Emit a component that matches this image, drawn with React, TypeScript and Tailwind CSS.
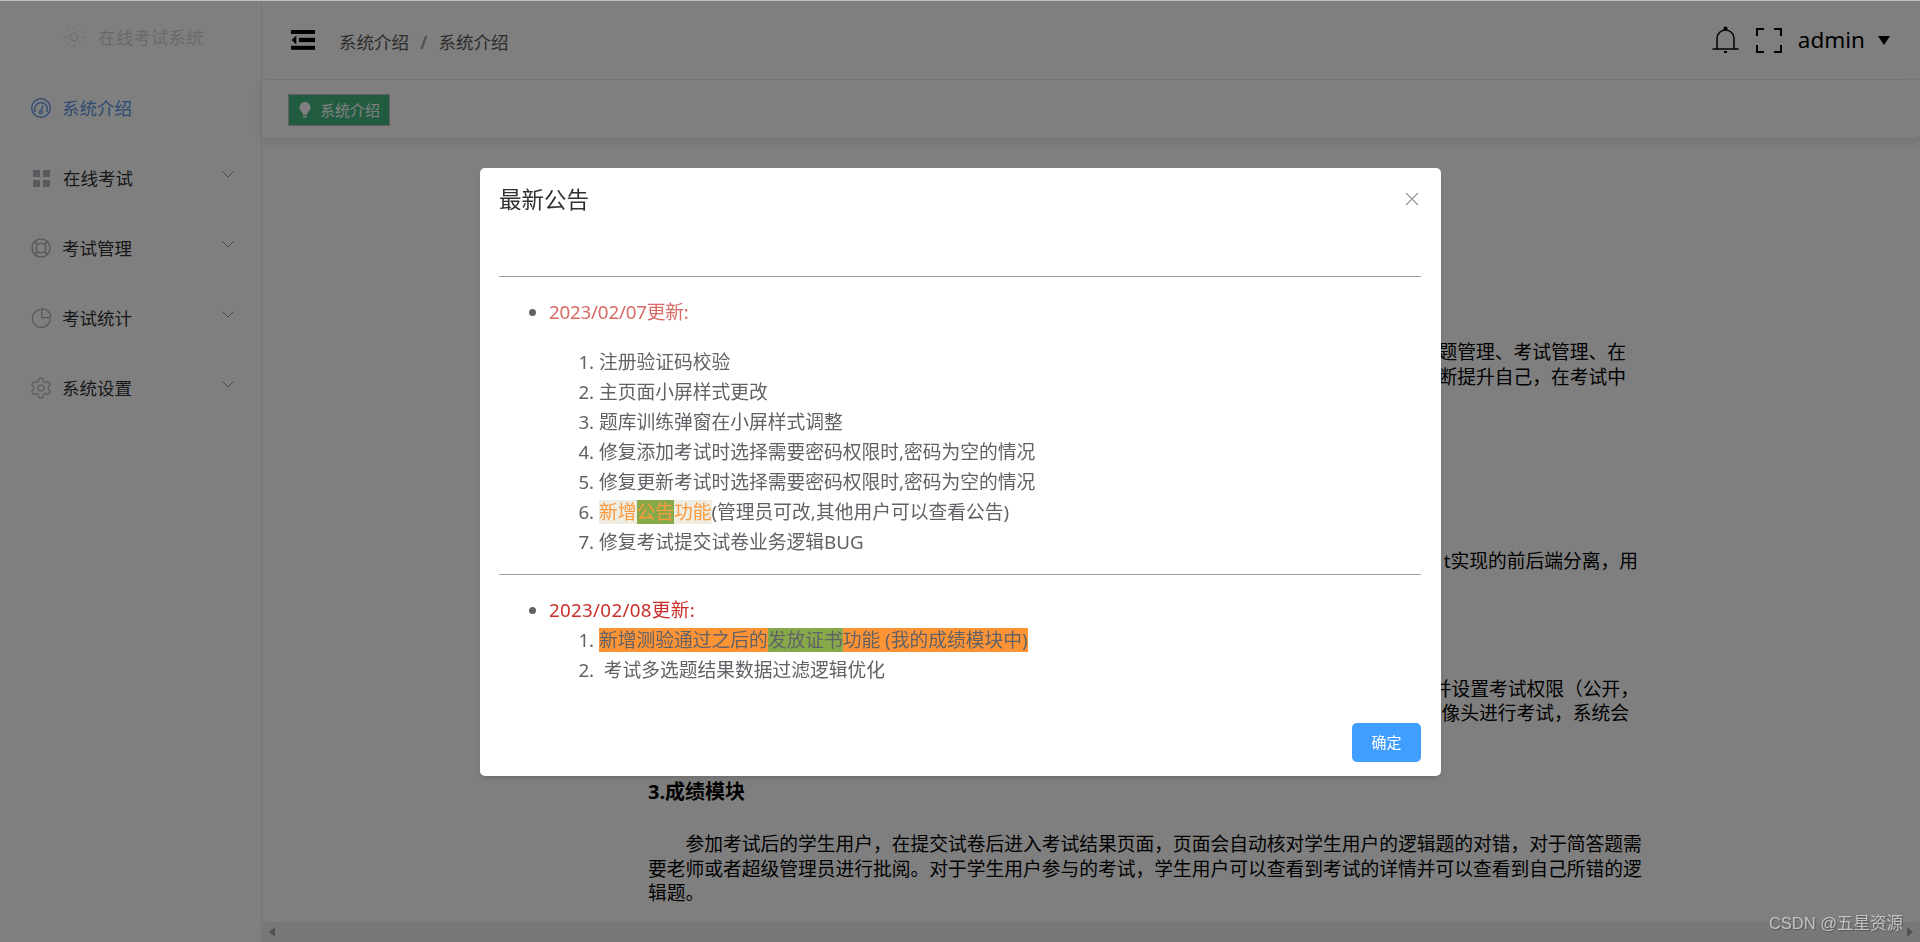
import { Settings, Sun } from "lucide-react";

const fontStack = "font-['Noto_Sans','Noto_Sans_CJK_SC',sans-serif]";

function GaugeIcon() {
  return (
    <svg viewBox="0 0 20 20" className="h-5 w-5 shrink-0" fill="none" stroke="currentColor" strokeWidth="1.300">
      <circle cx="10" cy="10" r="9.300" />
      <path d="M4.300 14a6.400 6.400 0 1 1 11.400 0" />
      <path d="M11.800 7.200 10.300 13" />
      <circle cx="9.800" cy="14.300" r="1.400" />
    </svg>
  );
}

function GridIcon() {
  return (
    <div className="mx-[2px] grid h-[17px] w-[17px] shrink-0 grid-cols-2 gap-[3px]">
      <span className="bg-[#b4b4bc]" />
      <span className="bg-[#b4b4bc]" />
      <span className="bg-[#b4b4bc]" />
      <span className="bg-[#b4b4bc]" />
    </div>
  );
}

function HelpIcon() {
  return (
    <svg viewBox="0 0 20 20" className="h-5 w-5 shrink-0" fill="none" stroke="#b4b4bc" strokeWidth="1.500">
      <circle cx="10" cy="10" r="9" />
      <circle cx="10" cy="10" r="4.800" />
      <path d="M3.700 3.700 6.600 6.600M16.300 3.700 13.400 6.600M3.700 16.300 6.600 13.400M16.300 16.300 13.400 13.400" strokeWidth="1.800" />
    </svg>
  );
}

function PieIcon() {
  return (
    <svg viewBox="0 0 20 20" className="h-5 w-5 shrink-0" fill="none" stroke="#b4b4bc" strokeWidth="1.400">
      <path d="M9.700 1.500A9 9 0 1 0 19.300 11" />
      <path d="M10.800 0.600V9.600H19.800A9 9 0 0 0 10.800 0.600z" />
    </svg>
  );
}

function Chevron() {
  return (
    <svg viewBox="0 0 12 7" className="mr-[27px] mb-2 ml-auto h-[7px] w-3" fill="none" stroke="#909399" strokeWidth="1">
      <path d="M.5.5 6 6l5.500-5.500" />
    </svg>
  );
}

function MenuFoldIcon() {
  return (
    <svg viewBox="0 0 24 20" className="h-5 w-6 shrink-0 text-black" fill="currentColor">
      <rect x="0" y="0" width="24" height="4" />
      <rect x="8" y="7.800" width="16" height="4.300" />
      <path d="M5.300 5.500v9L0.700 10z" />
      <rect x="0" y="15.800" width="24" height="4" />
    </svg>
  );
}

function BellIcon() {
  return (
    <svg viewBox="0 0 27 28" className="h-7 w-[27px]" fill="none" stroke="#000" strokeWidth="1.500">
      <path d="M5 23V12.500a8.500 8.500 0 0 1 17 0V23" />
      <path d="M0.500 23h26" />
      <circle cx="13.500" cy="2.500" r="1.300" fill="#000" />
      <path d="M12 26h3" strokeWidth="2" />
    </svg>
  );
}

function FullscreenIcon() {
  return (
    <svg viewBox="0 0 26 25" className="h-[25px] w-[26px]" fill="none" stroke="#000" strokeWidth="2">
      <path d="M8 1H1v7M18 1h7v7M1 17v7h7M25 17v7h-7" />
    </svg>
  );
}

function BulbIcon() {
  return (
    <svg viewBox="0 0 12 16" className="h-4 w-3 shrink-0" fill="#fff">
      <path d="M6 0a5.500 5.500 0 0 0-3 10.100L4 13h4l1-2.900A5.500 5.500 0 0 0 6 0z" />
      <rect x="4" y="14" width="4" height="1.500" />
    </svg>
  );
}

const menu = [
  { name: "在线考试", icon: <GridIcon /> },
  { name: "考试管理", icon: <HelpIcon /> },
  { name: "考试统计", icon: <PieIcon /> },
  { name: "系统设置", icon: <Settings size={24} strokeWidth={1.200} className="-mx-0.5 shrink-0 text-[#b4b4bc]" /> },
];

const fixes = [
  "注册验证码校验",
  "主页面小屏样式更改",
  "题库训练弹窗在小屏样式调整",
  "修复添加考试时选择需要密码权限时,密码为空的情况",
  "修复更新考试时选择需要密码权限时,密码为空的情况",
];

export default function App() {
  return (
    <div className={`flex h-screen overflow-hidden border-t border-[#bdbdbd] bg-white ${fontStack}`}>
      <aside className="w-[262px] shrink-0 border-r border-[#eeeeee] bg-white text-[17.5px]">
        <div className="flex h-[72px] items-center justify-center gap-[13px] pl-1 text-[#d4d4d4]">
          <Sun size={24} strokeWidth={1} className="shrink-0" />
          <span>在线考试系统</span>
        </div>
        <div className="flex h-[70px] items-center gap-[11px] pl-[31px] text-[#5a96e6]">
          <GaugeIcon />
          <span>系统介绍</span>
        </div>
        {menu.map((item) => (
          <div key={item.name} className="flex h-[70px] items-center gap-[11px] pl-[31px] text-[#303133]">
            {item.icon}
            <span>{item.name}</span>
            <Chevron />
          </div>
        ))}
      </aside>

      <div className="flex min-w-0 flex-1 flex-col">
        <header className="flex h-[79px] shrink-0 items-center border-b border-[#eeeeee] pr-[30px] pl-[29px]">
          <MenuFoldIcon />
          <div className="mt-1 ml-[24px] flex items-center text-[17.5px] text-[#5a5a5a]">
            <span>系统介绍</span>
            <span className="mx-[11px] text-[18px] font-bold text-[#a8a8a8]">/</span>
            <span>系统介绍</span>
          </div>
          <div className="ml-auto flex items-center">
            <BellIcon />
            <div className="mr-4 ml-[17px]">
              <FullscreenIcon />
            </div>
            <span className="text-[22.5px] leading-none text-black">admin</span>
            <span className="ml-[13px] h-0 w-0 border-x-[6.5px] border-t-[9px] border-x-transparent border-t-black" />
          </div>
        </header>

        <div className="h-[58px] shrink-0 rounded-b-[5px] bg-white pt-[14px] pl-[26px] shadow-[0_4px_12px_rgba(0,0,0,0.12)]">
          <div className="flex h-[32px] w-[102px] items-center gap-[9px] border border-[#bebebe] bg-[#42b983] pl-[10px] text-[15px] text-white">
            <BulbIcon />
            <span>系统介绍</span>
          </div>
        </div>

        <main className="min-h-0 flex-1 overflow-hidden pt-[202px] pl-[386px] text-[18.75px] leading-[24.500px] text-black">
          <div className="w-[994px]">
            <div className="pr-4 text-right">题管理、考试管理、在</div>
            <div className="pr-4 text-right">断提升自己，在考试中</div>
            <div className="mt-[160px] pr-1 text-right">t实现的前后端分离，用</div>
            <div className="mt-[103px] pr-[3px] text-right">并设置考试权限（公开，</div>
            <div className="pr-[13px] text-right">像头进行考试，系统会</div>
            <h3 className="mt-[54px] text-[20px] font-bold">3.成绩模块</h3>
            <p className="mt-[28px] indent-[37.500px]">
              参加考试后的学生用户，在提交试卷后进入考试结果页面，页面会自动核对学生用户的逻辑题的对错，对于简答题需要老师或者超级管理员进行批阅。对于学生用户参与的考试，学生用户可以查看到考试的详情并可以查看到自己所错的逻辑题。
            </p>
          </div>
        </main>

        <div className="flex h-5 shrink-0 items-center justify-between bg-[#f1f1f1] pr-[7px] pl-[7px]">
          <span className="h-0 w-0 border-y-[5px] border-r-[6px] border-y-transparent border-r-[#a3a3a3]" />
          <span className="h-0 w-0 border-y-[5px] border-l-[6px] border-y-transparent border-l-[#a3a3a3]" />
        </div>
      </div>

      {/* dialog over a dimmed page */}
      <div className="fixed inset-x-0 top-px bottom-0 bg-black/50">
        <div className="mx-auto mt-[167px] h-[608px] w-[961px] rounded-[5px] bg-white px-[19.500px] text-[#606266] shadow-md">
          <div className="relative pt-[17px] text-[22.500px] leading-[30px] text-[#303133]">
            最新公告
            <svg viewBox="0 0 14 14" className="absolute top-[24px] right-[2px] h-[14px] w-[14px]" fill="none" stroke="#909399" strokeWidth="1.100">
              <path d="M1 1l12 12M13 1 1 13" />
            </svg>
          </div>

          <hr className="mt-[61px] border-t border-[#a0a0a0]" />

          <ul className="mt-5 list-disc pl-[50px] text-[18.750px] leading-[30px]">
            <li>
              <span className="tracking-[-0.2px] text-[#d96a66]">2023/02/07更新:</span>
              <ol className="mt-5 list-decimal pl-[50px]">
                {fixes.map((text) => (
                  <li key={text}>{text}</li>
                ))}
                <li>
                  <span className="inline-block h-6 bg-[#efece1] leading-6 text-[#ff9a3c]">新增</span>
                  <span className="inline-block h-6 bg-[#87a94a] leading-6 text-[#ff9a3c]">公告</span>
                  <span className="inline-block h-6 bg-[#efece1] leading-6 text-[#ff9a3c]">功能</span>
                  (管理员可改,其他用户可以查看公告)
                </li>
                <li>修复考试提交试卷业务逻辑BUG</li>
              </ol>
            </li>
          </ul>

          <hr className="mt-[17px] border-t border-[#a0a0a0]" />

          <ul className="mt-5 list-disc pl-[50px] text-[18.750px] leading-[30px]">
            <li>
              <span className="tracking-[0.3px] text-[#c9302c]">2023/02/08更新:</span>
              <ol className="list-decimal pl-[50px]">
                <li>
                  <span className="inline-block h-6 bg-[#ff9436] leading-6">新增测验通过之后的</span>
                  <span className="inline-block h-6 bg-[#87a94a] leading-6">发放证书</span>
                  <span className="inline-block h-6 bg-[#ff9436] leading-6">功能 (我的成绩模块中)</span>
                </li>
                <li>&nbsp;考试多选题结果数据过滤逻辑优化</li>
              </ol>
            </li>
          </ul>

          <div className="mt-[38px] flex justify-end">
            <button className="h-[39px] w-[69px] rounded-[5px] bg-[#409eff] text-[15px] text-white">确定</button>
          </div>
        </div>
      </div>

      <div className="fixed right-[17px] bottom-[8px] font-['Liberation_Sans','Noto_Sans_CJK_SC',sans-serif] text-[16.500px] leading-[22px] text-[#c4c4c4] [text-shadow:1px_1px_1px_#555555]">
        CSDN @五星资源
      </div>
    </div>
  );
}
